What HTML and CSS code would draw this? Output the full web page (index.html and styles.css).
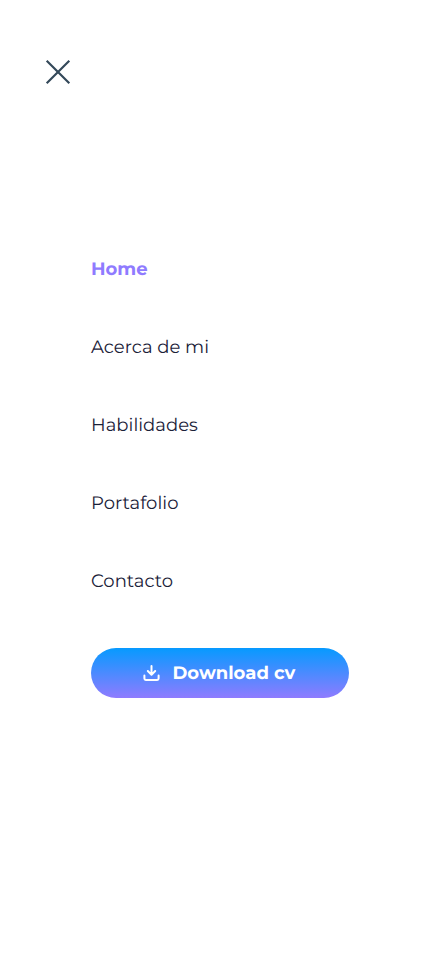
FILE: index.html
```html
<!DOCTYPE html>
<html lang="es">
<head>
<meta charset="utf-8">
<title>Menu</title>
<link rel="stylesheet" href="styles.css">
</head>
<body>
<div class="menu">
  <button class="close" aria-label="Cerrar">
    <svg width="26" height="26" viewBox="0 0 26 26" fill="none" stroke="#34495a" stroke-width="2.2"><path d="M1.7 1.7L24.3 24.3M24.3 1.7L1.7 24.3"/></svg>
  </button>
  <nav class="links">
    <a class="link active">Home</a>
    <a class="link">Acerca de mi</a>
    <a class="link">Habilidades</a>
    <a class="link">Portafolio</a>
    <a class="link">Contacto</a>
  </nav>
  <a class="download">
    <svg class="icon" width="18" height="18" viewBox="0 0 18 18" fill="none" stroke="#fff" stroke-width="2" stroke-linecap="round" stroke-linejoin="round"><path d="M8.5 2V10.4M4.8 7L8.5 10.7L12.2 7M1.4 11.4V14.6Q1.4 16 2.8 16H14.2Q15.6 16 15.6 14.6V11.4"/></svg>
    <span class="label">Download cv</span>
  </a>
</div>
</body>
</html>
```
FILE: styles.css
```css
* { box-sizing: border-box; }
body { margin: 0; background: #fff; font-family: Montserrat, Inter, "Open Sans", sans-serif; text-rendering: geometricPrecision; }
.menu { height: 956px; padding: 59px 91px 0 45px; display: flex; flex-direction: column; }
.close { width: 26px; height: 26px; padding: 0; border: 0; background: none; }
.close svg { display: block; }
.links { margin: 172px 0 0 46px; display: flex; flex-direction: column; gap: 54px; }
.link { height: 24px; line-height: 24px; font-size: 18px; letter-spacing: 0.02px; color: #1a2138; white-space: nowrap; }
.active { color: #8f7bff; font-weight: 700; }
.download { margin: 55px 0 0 46px; height: 50px; border-radius: 25px; background: linear-gradient(#069aff, #8f7bff); display: flex; align-items: center; padding-left: 52px; gap: 11.5px; color: #fff; font-size: 18px; font-weight: 700; white-space: nowrap; }
```
